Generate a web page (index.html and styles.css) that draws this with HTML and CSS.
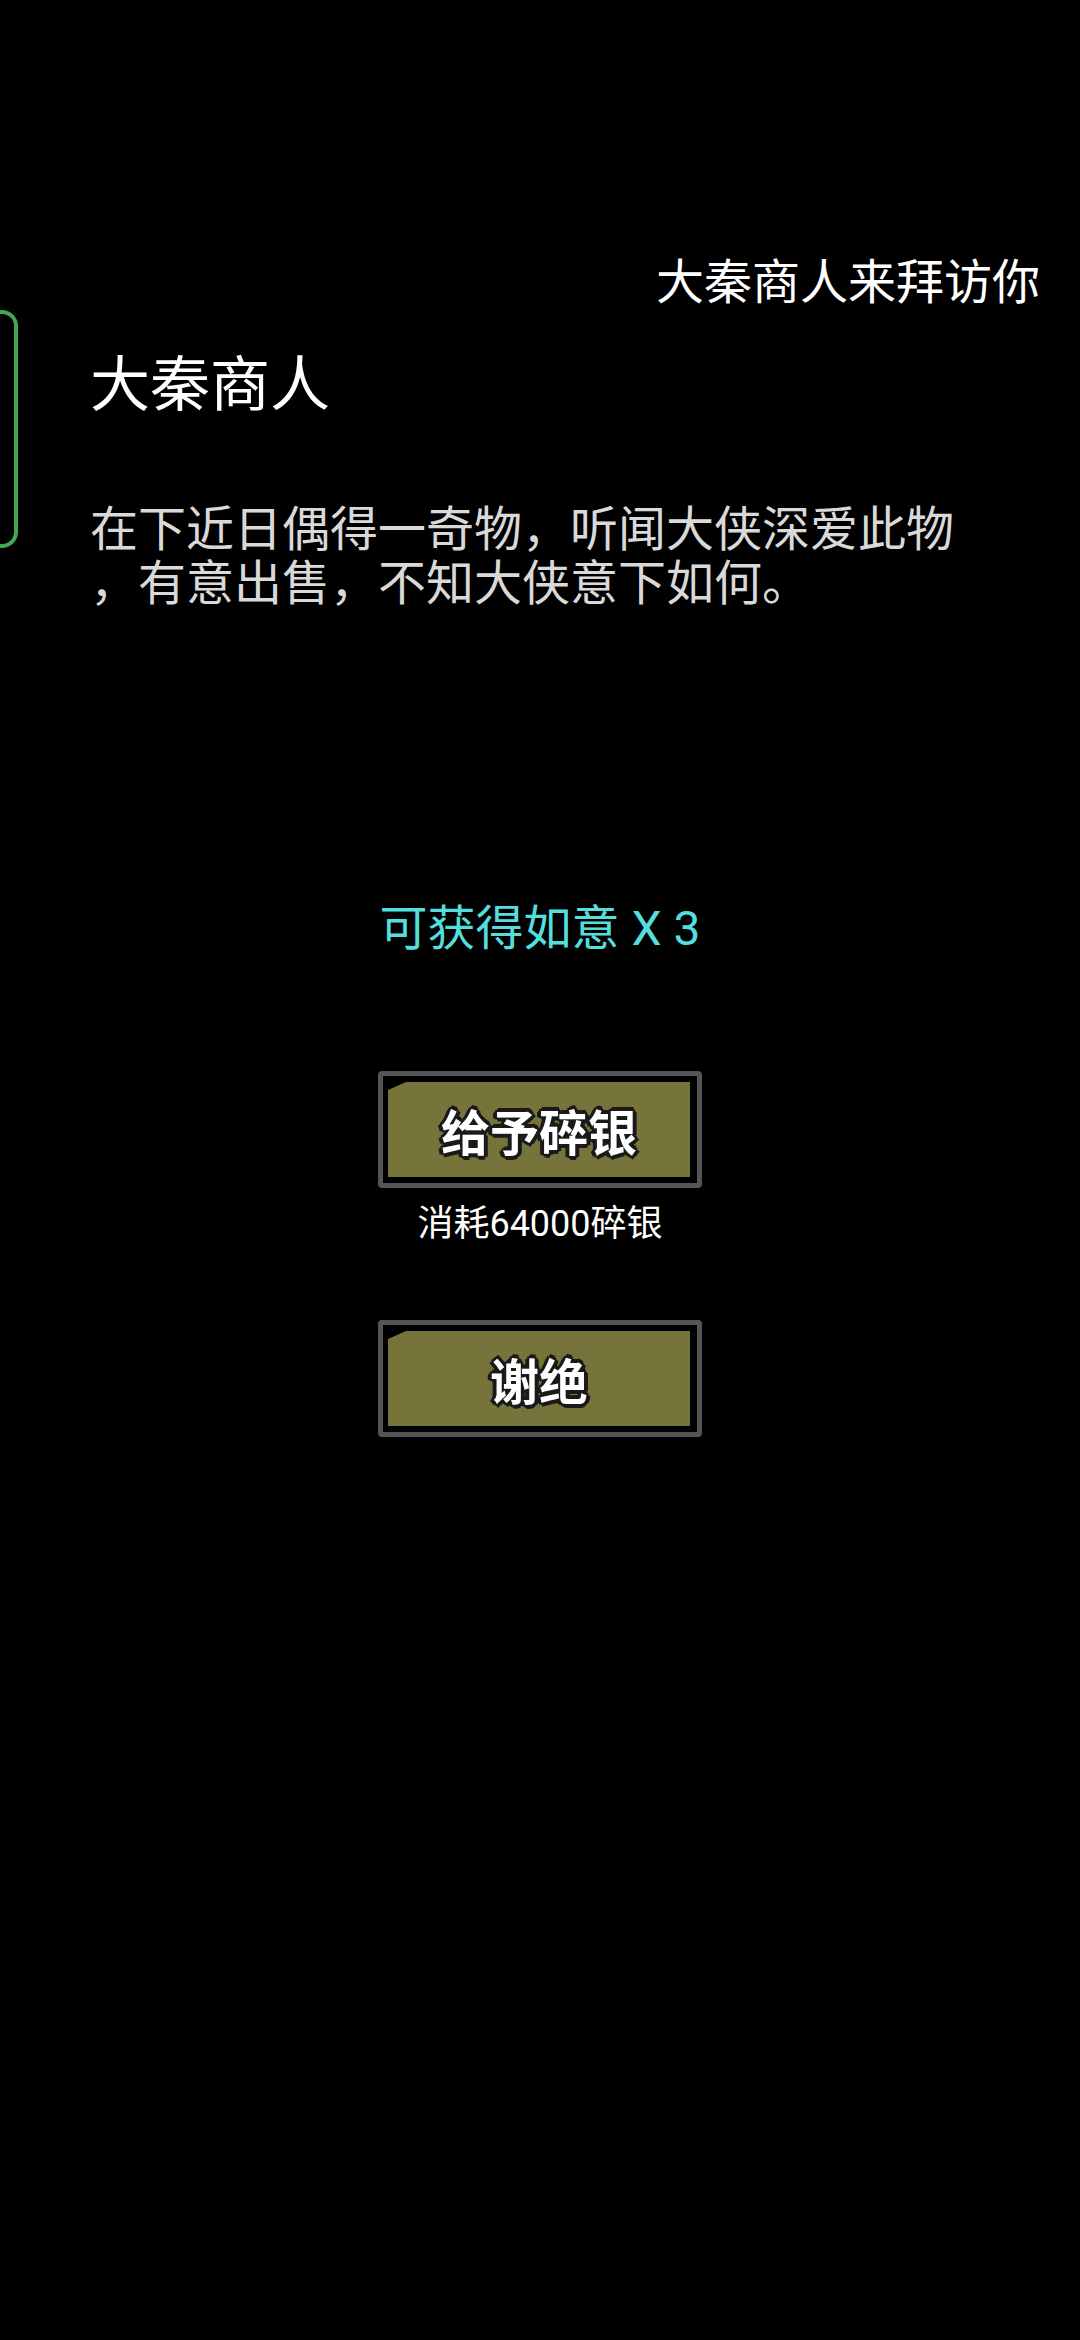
FILE: index.html
```html
<!DOCTYPE html>
<html lang="zh-CN">
<head>
<meta charset="utf-8">
<title>大秦商人</title>
<link rel="stylesheet" href="styles.css">
</head>
<body>
<div class="page">
  <div class="header">大秦商人来拜访你</div>
  <div class="dialog">
    <div class="bracket"></div>
    <div class="dialog-content">
      <div class="title">大秦商人</div>
      <div class="speech">
        <span class="line">在下近日偶得一奇物，听闻大侠深爱此物</span>
        <span class="line">，有意出售，不知大侠意下如何。</span>
      </div>
    </div>
  </div>
  <div class="reward">可获得如意 X 3</div>
  <div class="actions">
    <div class="btn btn-first"><div class="btn-fill"><span class="btn-label">给予碎银</span></div></div>
    <div class="cost">消耗64000碎银</div>
    <div class="btn btn-second"><div class="btn-fill"><span class="btn-label">谢绝</span></div></div>
  </div>
</div>
</body>
</html>
```

FILE: styles.css
```css
html, body {
  margin: 0;
  padding: 0;
  background: #000;
}
body {
  font-family: "Noto Sans CJK SC", "Noto Sans", sans-serif;
  color: #fff;
}
.page {
  width: 1080px;
  height: 2340px;
  overflow: hidden;
  background: #000;
}
.header {
  padding-top: 246px;
  padding-right: 40px;
  font-size: 48px;
  line-height: 64px;
  text-align: right;
  color: #fff;
}
.dialog {
  display: flex;
  align-items: flex-start;
}
.bracket {
  flex-shrink: 0;
  width: 14px;
  height: 230px;
  border: 4px solid #43a853;
  border-left: none;
  border-radius: 0 16px 16px 0;
}
.dialog-content {
  margin-left: 72px;
  padding-top: 30px;
}
.title {
  font-size: 60px;
  line-height: 80px;
  color: #fff;
}
.speech {
  margin-top: 78px;
  font-size: 48px;
  line-height: 54px;
  color: #d9d9d9;
}
.line {
  display: block;
  white-space: nowrap;
}
.reward {
  margin-top: 291px;
  font-family: "Roboto", "Noto Sans CJK SC", sans-serif;
  font-size: 48px;
  line-height: 64px;
  text-align: center;
  color: #55dede;
}
.actions {
  display: flex;
  flex-direction: column;
  align-items: center;
}
.btn {
  width: 302px;
  padding: 6px 7px 6px 5px;
  border: 5px solid #555;
  border-radius: 4px;
  background: #000;
}
.btn-first {
  margin-top: 110px;
}
.btn-second {
  margin-top: 74px;
}
.btn-fill {
  height: 95px;
  background: #77743b;
  clip-path: polygon(18px 0, 100% 0, 100% 100%, 0 100%, 0 8px);
  display: flex;
  align-items: center;
  justify-content: center;
}
.btn-label {
  font-size: 49px;
  font-weight: 700;
  line-height: 60px;
  color: #fff;
  text-shadow:
    3px 0 0 #1a1a1a, -3px 0 0 #1a1a1a, 0 3px 0 #1a1a1a, 0 -3px 0 #1a1a1a,
    2px 2px 0 #1a1a1a, -2px 2px 0 #1a1a1a, 2px -2px 0 #1a1a1a, -2px -2px 0 #1a1a1a,
    4px 1px 0 #1a1a1a, -4px 1px 0 #1a1a1a, 1px 4px 0 #1a1a1a, 1px -4px 0 #1a1a1a;
}
.cost {
  margin-top: 14px;
  font-family: "Roboto", "Noto Sans CJK SC", sans-serif;
  font-size: 36px;
  line-height: 44px;
  color: #fff;
}
```
